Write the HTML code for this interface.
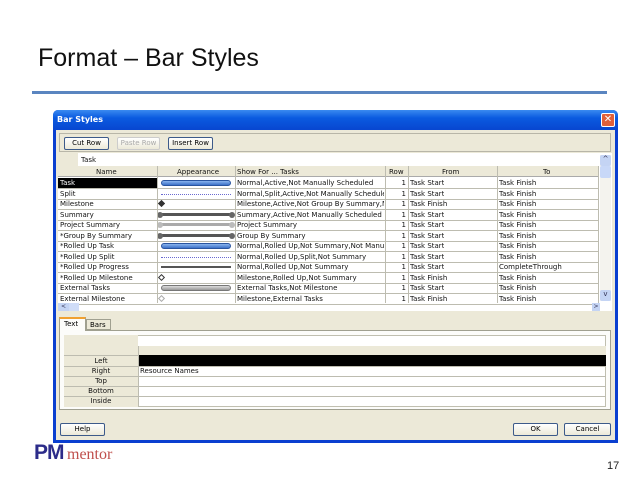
<!DOCTYPE html>
<html><head><style>
*{margin:0;padding:0;box-sizing:border-box}
body{width:638px;height:478px;background:#fff;position:relative;overflow:hidden;font-family:"DejaVu Sans","Liberation Sans",sans-serif}
.a{position:absolute}
.t{font-size:7px;color:#111;white-space:nowrap;overflow:hidden;line-height:10px}
.btn{position:absolute;border:1px solid #3c5a8a;border-radius:2px;background:linear-gradient(#fff,#ece9d8);font-size:7px;text-align:center;line-height:11px;color:#000}
.hl{position:absolute;height:1px;background:#bdbcb0}
.vl{position:absolute;width:1px;background:#bdbcb0}
</style></head><body>
<div class="a" style="left:38px;top:44px;font-family:'Liberation Sans',sans-serif;font-size:25px;color:#111">Format – Bar Styles</div>
<div class="a" style="left:32px;top:91px;width:575px;height:3px;background:#5a85c0"></div>

<!-- dialog -->
<div class="a" style="left:53px;top:110px;width:565px;height:333px;background:#0a3fd0;border-radius:5px 5px 0 0"></div>
<div class="a" style="left:53px;top:110px;width:565px;height:20px;background:linear-gradient(#3a8af0,#0a5ae0 40%,#0846d0);border-radius:5px 5px 0 0"></div>
<div class="a" style="left:57px;top:113px;font-size:8px;font-weight:bold;color:#fff;line-height:14px">Bar Styles</div>
<div class="a" style="left:601px;top:113px;width:14px;height:14px;background:#e0603a;border:1px solid #fff;border-radius:2px;color:#fff;font-size:10px;line-height:12px;text-align:center;font-weight:bold">✕</div>
<div class="a" style="left:56px;top:130px;width:559px;height:310px;background:#ece9d8"></div>
<div class="a" style="left:59px;top:133px;width:552px;height:19px;border:1px solid #b8b6a8"></div>
<div class="btn" style="left:64px;top:137px;width:45px;height:13px">Cut Row</div>
<div class="btn" style="left:117px;top:137px;width:43px;height:13px;color:#aaa;border-color:#ccc">Paste Row</div>
<div class="btn" style="left:168px;top:137px;width:45px;height:13px">Insert Row</div>

<!-- table area -->
<div class="a" style="left:58px;top:153px;width:554px;height:158px;background:#fff"></div>
<div class="a" style="left:58px;top:153px;width:20px;height:13px;background:#ece9d8"></div>
<div class="a t" style="left:81px;top:155px">Task</div>
<div class="a" style="left:58px;top:166px;width:540px;height:11px;background:#ece9d8;border-bottom:1px solid #aaa"></div>
<div class="a t" style="left:96px;top:167px">Name</div>
<div class="a t" style="left:177px;top:167px">Appearance</div>
<div class="a t" style="left:237px;top:167px">Show For ... Tasks</div>
<div class="a t" style="left:389px;top:167px">Row</div>
<div class="a t" style="left:442px;top:167px">From</div>
<div class="a t" style="left:543px;top:167px">To</div>
<div id="rows"></div>
<!-- scrollbars -->
<div class="a" style="left:600px;top:155px;width:11px;height:146px;background:#f4f3ee"></div>
<div class="a" style="left:600px;top:155px;width:11px;height:11px;background:#c4d4f4;border-radius:2px;font-size:7px;text-align:center;color:#335">^</div>
<div class="a" style="left:600px;top:166px;width:11px;height:12px;background:#c8d8f8;border-radius:2px"></div>
<div class="a" style="left:600px;top:290px;width:11px;height:11px;background:#c4d4f4;border-radius:2px;font-size:7px;text-align:center;color:#335">v</div>
<div class="a" style="left:58px;top:303px;width:11px;height:8px;background:#c4d4f4;font-size:6px;color:#335;text-align:center">&lt;</div>
<div class="a" style="left:69px;top:303px;width:10px;height:8px;background:#d0ddf8"></div>
<div class="a" style="left:592px;top:303px;width:8px;height:8px;background:#c4d4f4;font-size:6px;color:#335;text-align:center">&gt;</div>

<!-- tabs -->
<div class="a" style="left:59px;top:330px;width:552px;height:80px;border:1px solid #a0a090;background:#fcfcfa"></div>
<div class="a" style="left:59px;top:317px;width:27px;height:14px;background:#fcfcfa;border:1px solid #a0a090;border-bottom:none;border-top:2px solid #f0a030;font-size:7px;padding:1px 0 0 4px">Text</div>
<div class="a" style="left:86px;top:319px;width:25px;height:11px;background:#ece9d8;border:1px solid #a0a090;font-size:7px;padding:1px 0 0 3px">Bars</div>
<div class="a" style="left:64px;top:335px;width:542px;height:72px;background:#fff;border:1px solid #c0bfb0"></div>
<div class="a" style="left:64px;top:335px;width:74px;height:72px;background:#ece9d8"></div>
<div class="a" style="left:64px;top:335px;width:19px;height:11px;background:#ece9d8"></div>
<div class="a" style="left:138px;top:346px;width:468px;height:9px;background:#ece9d8"></div>
<div class="a" style="left:138px;top:355px;width:468px;height:11px;background:#000"></div>
<div class="a t" style="left:64px;top:356px;width:74px;text-align:center">Left</div>
<div class="a t" style="left:64px;top:366px;width:74px;text-align:center">Right</div>
<div class="a t" style="left:64px;top:376px;width:74px;text-align:center">Top</div>
<div class="a t" style="left:64px;top:386px;width:74px;text-align:center">Bottom</div>
<div class="a t" style="left:64px;top:396px;width:74px;text-align:center">Inside</div>
<div class="a t" style="left:140px;top:366px">Resource Names</div>
<div class="hl" style="left:64px;top:366px;width:542px"></div>
<div class="hl" style="left:64px;top:376px;width:542px"></div>
<div class="hl" style="left:64px;top:386px;width:542px"></div>
<div class="hl" style="left:64px;top:396px;width:542px"></div>
<div class="hl" style="left:64px;top:355px;width:74px"></div>
<div class="vl" style="left:138px;top:346px;height:61px"></div>

<div class="btn" style="left:60px;top:423px;width:45px;height:13px">Help</div>
<div class="btn" style="left:513px;top:423px;width:45px;height:13px">OK</div>
<div class="btn" style="left:564px;top:423px;width:47px;height:13px">Cancel</div>

<div class="a" style="left:34px;top:441px;font-family:'Liberation Sans',sans-serif;font-weight:bold;font-size:21px;color:#2c2c8a;line-height:24px;letter-spacing:-1px">PM</div>
<div class="a" style="left:67px;top:446px;font-family:'Liberation Serif',serif;font-size:16px;color:#c0504d;line-height:18px">mentor</div>
<div class="a" style="left:607px;top:460px;font-family:'Liberation Sans',sans-serif;font-size:11px;color:#222">17</div>

<script>
var R=[["Task","b","Normal,Active,Not Manually Scheduled","Task Start","Task Finish"],
["Split","d","Normal,Split,Active,Not Manually Schedule","Task Start","Task Finish"],
["Milestone","m","Milestone,Active,Not Group By Summary,Nc","Task Finish","Task Finish"],
["Summary","s","Summary,Active,Not Manually Scheduled","Task Start","Task Finish"],
["Project Summary","p","Project Summary","Task Start","Task Finish"],
["*Group By Summary","g","Group By Summary","Task Start","Task Finish"],
["*Rolled Up Task","b","Normal,Rolled Up,Not Summary,Not Manua","Task Start","Task Finish"],
["*Rolled Up Split","d","Normal,Rolled Up,Split,Not Summary","Task Start","Task Finish"],
["*Rolled Up Progress","l","Normal,Rolled Up,Not Summary","Task Start","CompleteThrough"],
["*Rolled Up Milestone","o","Milestone,Rolled Up,Not Summary","Task Finish","Task Finish"],
["External Tasks","x","External Tasks,Not Milestone","Task Start","Task Finish"],
["External Milestone","e","Milestone,External Tasks","Task Finish","Task Finish"]];
var h="";
R.forEach(function(r,i){var y=178+i*10.5;
h+='<div class="hl" style="left:58px;top:'+(y+10)+'px;width:540px"></div>';
if(i==0)h+='<div class="a" style="left:58px;top:'+y+'px;width:99px;height:10px;background:#000"></div>';
h+='<div class="a t" style="left:60px;top:'+y+'px;width:96px;'+(i==0?'color:#fff':'')+'">'+r[0]+'</div>';
h+='<div class="a t" style="left:237px;top:'+y+'px;width:147px">'+r[2]+'</div>';
h+='<div class="a t" style="left:386px;top:'+y+'px;width:20px;text-align:right">1</div>';
h+='<div class="a t" style="left:410px;top:'+y+'px">'+r[3]+'</div>';
h+='<div class="a t" style="left:499px;top:'+y+'px">'+r[4]+'</div>';
var k=r[1],s='';
if(k=="b")s='left:161px;top:'+(y+2)+'px;width:70px;height:6px;background:linear-gradient(#8ab4ee,#3d72c8);border:1px solid #2a55a0;border-radius:3px';
if(k=="x")s='left:161px;top:'+(y+2)+'px;width:70px;height:6px;background:linear-gradient(#ddd,#999);border:1px solid #777;border-radius:3px';
if(k=="d")s='left:161px;top:'+(y+5)+'px;width:70px;height:0;border-top:1px dotted #6a6ad0';
if(k=="l")s='left:161px;top:'+(y+4)+'px;width:70px;height:2px;background:#555';
if(k=="s"||k=="g")s='left:159px;top:'+(y+3)+'px;width:74px;height:3px;background:#555';
if(k=="p")s='left:159px;top:'+(y+3)+'px;width:74px;height:3px;background:#aaa';
if(s)h+='<div class="a" style="'+s+'"></div>';
if(k=="s"||k=="p"||k=="g"){var c=k=="p"?'#bbb':'#666';h+='<div class="a" style="left:157px;top:'+(y+2)+'px;width:6px;height:6px;border-radius:3px;background:'+c+'"></div><div class="a" style="left:229px;top:'+(y+2)+'px;width:6px;height:6px;border-radius:3px;background:'+c+'"></div>';}
if(k=="m"||k=="o"||k=="e"){var bg=k=="m"?'#333':'#fff',bc=k=="e"?'#aaa':'#333';h+='<div class="a" style="left:159px;top:'+(y+2)+'px;width:5px;height:5px;transform:rotate(45deg);background:'+bg+';border:1px solid '+bc+'"></div>';}
});
h+='<div class="vl" style="left:157px;top:166px;height:137px"></div><div class="vl" style="left:235px;top:166px;height:137px"></div><div class="vl" style="left:385px;top:166px;height:137px"></div><div class="vl" style="left:408px;top:166px;height:137px"></div><div class="vl" style="left:497px;top:166px;height:137px"></div><div class="vl" style="left:598px;top:166px;height:137px"></div>';
document.getElementById("rows").innerHTML=h;
</script>
</body></html>
